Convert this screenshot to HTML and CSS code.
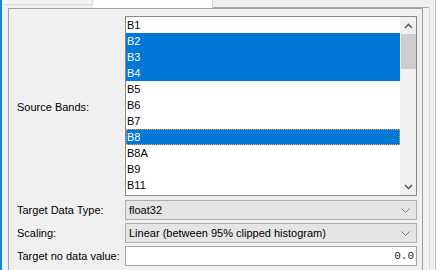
FILE: index.html
```html
<!DOCTYPE html>
<html lang="en">
<head>
    <meta charset="UTF-8">
    <title>Band Select</title>
    <link rel="stylesheet" href="styles.css">
</head>
<body>

<div class="window">
    <div class="tabs">
        <div class="tab"></div>
        <div class="tab selected"></div>
        <div class="tab-fill"></div>
    </div>

    <div class="pane">
        <div class="panel">
            <div class="form">
                <label class="label">Source Bands:</label>
                <div class="listbox">
                    <ul class="items">
                        <li>B1</li>
                        <li class="sel">B2</li>
                        <li class="sel">B3</li>
                        <li class="sel">B4</li>
                        <li>B5</li>
                        <li>B6</li>
                        <li>B7</li>
                        <li class="sel focus">B8</li>
                        <li>B8A</li>
                        <li>B9</li>
                        <li>B11</li>
                    </ul>
                    <div class="scrollbar">
                        <div class="arrow">
                            <svg width="9" height="6" viewBox="0 0 9 6"><polyline points="1,5 4.5,1.5 8,5" fill="none" stroke="#606060" stroke-width="1.6"/></svg>
                        </div>
                        <div class="track"><div class="thumb"></div></div>
                        <div class="arrow">
                            <svg width="9" height="6" viewBox="0 0 9 6"><polyline points="1,1 4.5,4.5 8,1" fill="none" stroke="#606060" stroke-width="1.6"/></svg>
                        </div>
                    </div>
                </div>

                <label class="label">Target Data Type:</label>
                <div class="combo">
                    <span>float32</span>
                    <svg width="9" height="5" viewBox="0 0 9 5"><polyline points="0.5,0.5 4.5,4.5 8.5,0.5" fill="none" stroke="#7a7a7a" stroke-width="1"/></svg>
                </div>

                <label class="label">Scaling:</label>
                <div class="combo">
                    <span>Linear (between 95% clipped histogram)</span>
                    <svg width="9" height="5" viewBox="0 0 9 5"><polyline points="0.5,0.5 4.5,4.5 8.5,0.5" fill="none" stroke="#7a7a7a" stroke-width="1"/></svg>
                </div>

                <label class="label">Target no data value:</label>
                <div class="field">0.0</div>
            </div>
        </div>
    </div>
</div>

</body>
</html>
```

FILE: styles.css
```css
body {
    margin: 0;
    background-color: #f0f0f0;
    font-family: "Liberation Sans", Arial, sans-serif;
    font-size: 11px;
    color: #000;
    overflow: hidden;
}
.window {
    width: 436px;
    height: 270px;
    box-sizing: border-box;
    border-left: 2px solid #1883d7;
    border-right: 1px solid #9cc6ea;
    overflow: hidden;
}
.tabs {
    display: flex;
    height: 8px;
}
.tab {
    width: 89px;
    height: 4px;
    margin-left: 1px;
    background-color: #f3f3f3;
    border-right: 1px solid #d9d9d9;
    border-bottom: 1px solid #d9d9d9;
}
.tab.selected {
    width: 119px;
    height: 8px;
    margin-left: 0;
    background-color: #fdfdfd;
    border-bottom: none;
}
.tab-fill {
    width: 216px;
    height: 7px;
    border-bottom: 1px solid #a9a9a9;
}
.pane {
    width: 427px;
    border-right: 1px solid #d9d9d9;
    height: 262px;
}
.panel {
    margin-left: 6px;
    width: 415px;
    box-sizing: border-box;
    height: 280px;
    border: 1px solid #a0a0a0;
    padding: 7px 6px 0 8px;
}
.form {
    display: grid;
    grid-template-columns: 108px 292px;
    row-gap: 3px;
    align-items: center;
}
.label {
    white-space: nowrap;
}
.listbox {
    display: flex;
    height: 180px;
    box-sizing: border-box;
    border: 1px solid #828790;
    background-color: #fff;
    margin-bottom: 1px;
}
.items {
    list-style: none;
    margin: 0;
    padding: 0;
    flex: 1;
}
.items li {
    height: 16px;
    line-height: 16px;
    padding-left: 1px;
}
.items li.sel {
    background-color: #0078d7;
    color: #fff;
}
.items li.focus {
    outline: 1px dotted #f2a03a;
    outline-offset: -1px;
}
.scrollbar {
    width: 16px;
    display: flex;
    flex-direction: column;
    background-color: #f0f0f0;
}
.arrow {
    height: 17px;
    display: flex;
    align-items: center;
    justify-content: center;
}
.track {
    flex: 1;
}
.thumb {
    height: 35px;
    margin-left: 1px;
    background-color: #cdcdcd;
}
.combo {
    height: 20px;
    box-sizing: border-box;
    border: 1px solid #adadad;
    background-color: #e5e5e5;
    display: flex;
    align-items: center;
    justify-content: space-between;
    padding: 0 6px 0 3px;
}
.field {
    height: 20px;
    box-sizing: border-box;
    border: 1px solid #a5a5a5;
    background-color: #fff;
    text-align: right;
    padding-right: 2px;
    line-height: 18px;
    font-family: "Liberation Mono", "Courier New", monospace;
    color: #302030;
}
```
